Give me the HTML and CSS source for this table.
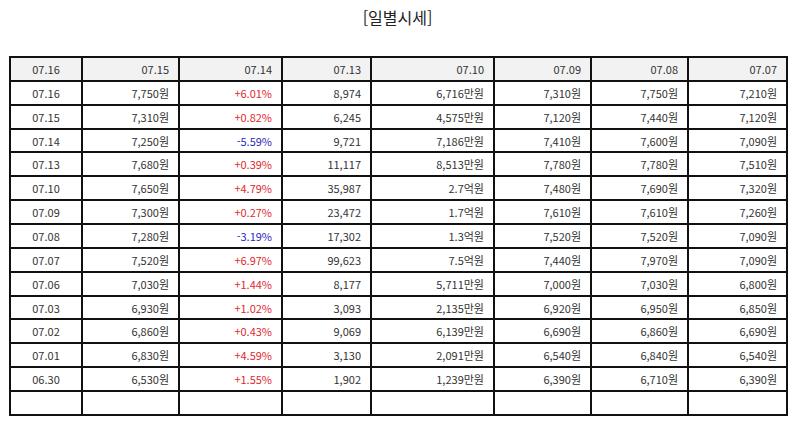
FILE: index.html
```html
<!DOCTYPE html>
<html lang="ko">
<head>
<meta charset="utf-8">
<title>일별시세</title>
<link rel="stylesheet" href="styles.css">
</head>
<body>
<div class="wrap">
  <h2 class="title">[일별시세]</h2>
  <table class="grid">
    <colgroup>
      <col class="c1"><col class="c2"><col class="c3"><col class="c4"><col class="c5"><col class="c6"><col class="c7"><col class="c8">
    </colgroup>
    <thead>
      <tr><th class="date">07.16</th><th>07.15</th><th>07.14</th><th>07.13</th><th>07.10</th><th>07.09</th><th>07.08</th><th>07.07</th></tr>
    </thead>
    <tbody>
      <tr><td class="date">07.16</td><td>7,750원</td><td class="up">+6.01%</td><td>8,974</td><td>6,716만원</td><td>7,310원</td><td>7,750원</td><td>7,210원</td></tr>
      <tr><td class="date">07.15</td><td>7,310원</td><td class="up">+0.82%</td><td>6,245</td><td>4,575만원</td><td>7,120원</td><td>7,440원</td><td>7,120원</td></tr>
      <tr><td class="date">07.14</td><td>7,250원</td><td class="down">-5.59%</td><td>9,721</td><td>7,186만원</td><td>7,410원</td><td>7,600원</td><td>7,090원</td></tr>
      <tr><td class="date">07.13</td><td>7,680원</td><td class="up">+0.39%</td><td>11,117</td><td>8,513만원</td><td>7,780원</td><td>7,780원</td><td>7,510원</td></tr>
      <tr><td class="date">07.10</td><td>7,650원</td><td class="up">+4.79%</td><td>35,987</td><td>2.7억원</td><td>7,480원</td><td>7,690원</td><td>7,320원</td></tr>
      <tr><td class="date">07.09</td><td>7,300원</td><td class="up">+0.27%</td><td>23,472</td><td>1.7억원</td><td>7,610원</td><td>7,610원</td><td>7,260원</td></tr>
      <tr><td class="date">07.08</td><td>7,280원</td><td class="down">-3.19%</td><td>17,302</td><td>1.3억원</td><td>7,520원</td><td>7,520원</td><td>7,090원</td></tr>
      <tr><td class="date">07.07</td><td>7,520원</td><td class="up">+6.97%</td><td>99,623</td><td>7.5억원</td><td>7,440원</td><td>7,970원</td><td>7,090원</td></tr>
      <tr><td class="date">07.06</td><td>7,030원</td><td class="up">+1.44%</td><td>8,177</td><td>5,711만원</td><td>7,000원</td><td>7,030원</td><td>6,800원</td></tr>
      <tr><td class="date">07.03</td><td>6,930원</td><td class="up">+1.02%</td><td>3,093</td><td>2,135만원</td><td>6,920원</td><td>6,950원</td><td>6,850원</td></tr>
      <tr><td class="date">07.02</td><td>6,860원</td><td class="up">+0.43%</td><td>9,069</td><td>6,139만원</td><td>6,690원</td><td>6,860원</td><td>6,690원</td></tr>
      <tr><td class="date">07.01</td><td>6,830원</td><td class="up">+4.59%</td><td>3,130</td><td>2,091만원</td><td>6,540원</td><td>6,840원</td><td>6,540원</td></tr>
      <tr><td class="date">06.30</td><td>6,530원</td><td class="up">+1.55%</td><td>1,902</td><td>1,239만원</td><td>6,390원</td><td>6,710원</td><td>6,390원</td></tr>
      <tr class="empty"><td class="date"></td><td></td><td></td><td></td><td></td><td></td><td></td><td></td></tr>
    </tbody>
  </table>
</div>
</body>
</html>
```

FILE: styles.css
```css
html, body {
  margin: 0;
  padding: 0;
  background: #ffffff;
}
body {
  font-family: "Noto Sans CJK KR", "Noto Sans", sans-serif;
  color: #333333;
}
.wrap {
  padding: 4px 8px 0 9px;
}
.title {
  margin: 0;
  height: 52px;
  line-height: 26px;
  text-align: center;
  font-size: 16px;
  font-weight: normal;
  color: #222222;
}
.grid {
  width: 777px;
  table-layout: fixed;
  border-collapse: collapse;
  font-size: 11px;
}
.c1 { width: 72px; }
.c2 { width: 97px; }
.c3 { width: 103px; }
.c4 { width: 89px; }
.c5 { width: 123px; }
.c6 { width: 97px; }
.c7 { width: 97px; }
.c8 { width: 99px; }
.grid th, .grid td {
  border: 2px solid #111111;
  height: 21.87px;
  padding: 0 9px 0 4px;
  text-align: right;
  font-weight: normal;
  line-height: 14px;
  white-space: nowrap;
}
.grid th {
  background: #f2f2f2;
}
.grid .date {
  text-align: center;
  padding: 0 4px;
}
.up { color: #e0282e; }
.down { color: #2a2ac0; }
```
